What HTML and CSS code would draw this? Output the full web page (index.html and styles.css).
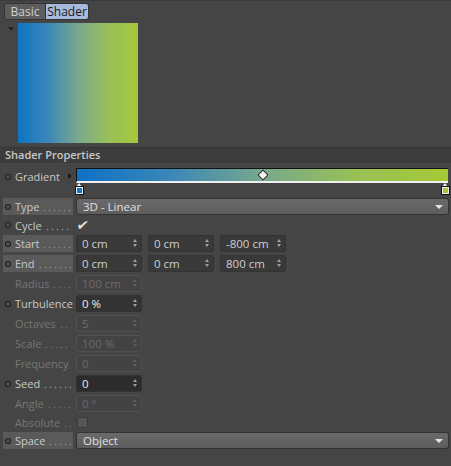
FILE: index.html
```html
<!DOCTYPE html>
<html>
<head>
<meta charset="utf-8">
<link rel="stylesheet" href="styles.css">
</head>
<body>
<div class="tabs">
  <div class="tab">Basic</div>
  <div class="tab active">Shader</div>
</div>
<div class="preview-row">
  <div class="tri-down"></div>
  <div class="preview"></div>
</div>
<div class="header">Shader Properties</div>
<div class="grad-row">
  <div class="label"><span class="dot"></span><span class="ltext">Gradient</span><span class="tri-right"></span></div>
  <div class="grad-wrap">
    <div class="grad-bar"></div>
    <div class="diamond"></div>
    <div class="knot knot-l"><span></span></div>
    <div class="knot knot-r"><span></span></div>
  </div>
</div>
<div class="rows">
  <div class="row">
    <div class="label hl"><span class="dot"></span><span class="ltext">Type</span><span class="dots"></span></div>
    <div class="dropdown">3D - Linear<span class="dd-arrow"></span></div>
  </div>
  <div class="row short">
    <div class="label"><span class="dot"></span><span class="ltext">Cycle</span><span class="dots"></span></div>
    <div class="check">&#10004;</div>
  </div>
  <div class="row">
    <div class="label hl"><span class="dot"></span><span class="ltext">Start</span><span class="dots"></span></div>
    <div class="field">0 cm<span class="spin"></span></div>
    <div class="field">0 cm<span class="spin"></span></div>
    <div class="field">-800 cm<span class="spin"></span></div>
  </div>
  <div class="row">
    <div class="label hl"><span class="dot"></span><span class="ltext">End</span><span class="dots"></span></div>
    <div class="field">0 cm<span class="spin"></span></div>
    <div class="field">0 cm<span class="spin"></span></div>
    <div class="field">800 cm<span class="spin"></span></div>
  </div>
  <div class="row dis">
    <div class="label"><span class="nodot"></span><span class="ltext">Radius</span><span class="dots"></span></div>
    <div class="field">100 cm<span class="spin"></span></div>
  </div>
  <div class="row">
    <div class="label"><span class="dot"></span><span class="ltext">Turbulence</span></div>
    <div class="field focus">0 %<span class="spin"></span></div>
  </div>
  <div class="row dis">
    <div class="label"><span class="nodot"></span><span class="ltext">Octaves</span><span class="dots"></span></div>
    <div class="field">5<span class="spin"></span></div>
  </div>
  <div class="row dis">
    <div class="label"><span class="nodot"></span><span class="ltext">Scale</span><span class="dots"></span></div>
    <div class="field">100 %<span class="spin"></span></div>
  </div>
  <div class="row dis">
    <div class="label"><span class="nodot"></span><span class="ltext">Frequency</span></div>
    <div class="field">0<span class="spin"></span></div>
  </div>
  <div class="row">
    <div class="label"><span class="dot"></span><span class="ltext">Seed</span><span class="dots"></span></div>
    <div class="field focus dark">0<span class="spin"></span></div>
  </div>
  <div class="row dis">
    <div class="label"><span class="nodot"></span><span class="ltext">Angle</span><span class="dots"></span></div>
    <div class="field">0 °<span class="spin"></span></div>
  </div>
  <div class="row dis short">
    <div class="label"><span class="nodot"></span><span class="ltext">Absolute</span><span class="dots"></span></div>
    <div class="cbox"></div>
  </div>
  <div class="row">
    <div class="label hl"><span class="dot"></span><span class="ltext">Space</span><span class="dots"></span></div>
    <div class="dropdown">Object<span class="dd-arrow"></span></div>
  </div>
</div>
</body>
</html>
```

FILE: styles.css
```css
html, body {
  margin: 0;
  padding: 0;
}
body {
  background: #454545;
  font-family: "Open Sans", "Noto Sans", sans-serif;
  font-size: 11px;
  color: #c8c8c8;
  width: 451px;
  height: 466px;
  overflow: hidden;
  border-top: 1px solid #3a3a3a;
  box-sizing: border-box;
}
.tabs {
  display: flex;
  padding: 2px 0 0 4px;
  height: 18px;
}
.tab {
  line-height: 15px;
  padding: 0;
  width: 42px;
  box-sizing: border-box;
  height: 17px;
  text-align: center;
  background: #5d5d5d;
  border: 1px solid #333;
  border-radius: 3px 0 0 3px;
  color: #cfcfcf;
  font-size: 12px;
}
.tab.active {
  width: 43px;
  background: #a7b9dc;
  color: #1a1a1a;
  border-radius: 0 3px 3px 0;
  border-left: none;
}
.preview-row {
  display: flex;
  padding-top: 2px;
  height: 122px;
}
.tri-down {
  width: 0;
  height: 0;
  border-left: 3px solid transparent;
  border-right: 3px solid transparent;
  border-top: 4px solid #222;
  margin: 4px 0 0 8px;
}
.preview {
  margin-left: 4px;
  width: 120px;
  height: 120px;
  background: linear-gradient(to right, #0e74c4 0%, #3a87b8 25%, #7aa88f 50%, #98bf5a 75%, #a6c83a 100%);
}
.header {
  margin-top: 2px;
  border-top: 1px solid #363636;
  background: #3c3c3c;
  height: 15px;
  line-height: 14px;
  padding-left: 5px;
  font-weight: 600;
  font-size: 11px;
  color: #c9c9c9;
}
.grad-row {
  display: flex;
  margin-top: 5px;
  height: 30px;
}
.label {
  width: 70px;
  margin-left: 3px;
  height: 17px;
  display: flex;
  align-items: center;
  white-space: nowrap;
  position: relative;
  font-size: 11px;
  flex: none;
}
.label.hl {
  background: #5a5a5a;
}
.dot {
  width: 4px;
  height: 4px;
  border: 1px solid #1e1e1e;
  border-radius: 2px;
  background: #4a4a4a;
  margin: 0 3px 0 2px;
  flex: none;
}
.nodot {
  width: 6px;
  margin: 0 3px 0 2px;
  flex: none;
}
.ltext {
  margin-left: 1px;
  flex: none;
}
.dots {
  flex: 1;
  align-self: stretch;
  margin: 0 2px 0 2px;
  background-image: radial-gradient(circle, #8a8a8a 0.7px, transparent 1.1px);
  background-size: 5px 3px;
  background-repeat: repeat-x;
  background-position: 1px 11px;
}
.row.dis .dots {
  background-image: radial-gradient(circle, #686868 0.7px, transparent 1.1px);
}
.tri-right {
  position: absolute;
  left: 65px;
  top: 5px;
  width: 0;
  height: 0;
  border-top: 3px solid transparent;
  border-bottom: 3px solid transparent;
  border-left: 4px solid #1c1c1c;
}
.grad-wrap {
  position: relative;
  margin-left: 3px;
  width: 372px;
}
.grad-bar {
  height: 12px;
  border-top: 1px solid #111;
  border-left: 1px solid #111;
  border-bottom: 2px solid #f0f0f0;
  background: linear-gradient(to right, #0e72c6 0%, #3a86b8 25%, #77a98d 50%, #98c055 75%, #a6c936 100%);
}
.diamond {
  position: absolute;
  left: 183px;
  top: 3px;
  width: 6px;
  height: 6px;
  background: #f4f4f4;
  border: 1px solid #222;
  transform: rotate(45deg);
}
.knot {
  position: absolute;
  top: 15px;
  width: 7px;
  height: 11px;
}
.knot::before {
  content: "";
  position: absolute;
  left: 0;
  top: 0;
  border-left: 3.5px solid transparent;
  border-right: 3.5px solid transparent;
  border-bottom: 4px solid #f0f0f0;
}
.knot span {
  position: absolute;
  left: 0;
  top: 4px;
  width: 5px;
  height: 5px;
  border: 1px solid #f0f0f0;
  outline: 1px solid #111;
}
.knot-l { left: 0; }
.knot-l span { background: #1177c8; }
.knot-r { left: 366px; }
.knot-r span { background: #a6c836; }
.rows {
  display: flex;
  flex-direction: column;
  gap: 3px;
}
.row {
  display: flex;
  align-items: center;
  height: 17px;
}
.row.short {
  height: 14px;
}
.row .label {
  margin-right: 3px;
}
.dropdown {
  height: 15px;
  line-height: 15px;
  border: 1px solid #333;
  border-radius: 3px;
  background: linear-gradient(#6a6a6a, #5d5d5d);
  color: #e0e0e0;
  padding-left: 6px;
  width: 365px;
  position: relative;
  font-size: 11.5px;
}
.dd-arrow {
  position: absolute;
  right: 5px;
  top: 6px;
  width: 0;
  height: 0;
  border-left: 4px solid transparent;
  border-right: 4px solid transparent;
  border-top: 4px solid #e6e6e6;
}
.check {
  color: #e0e0e0;
  font-size: 14px;
  line-height: 14px;
  margin-left: 1px;
  transform: skewX(-10deg);
}
.field {
  width: 59px;
  height: 15px;
  line-height: 15px;
  padding-left: 5px;
  border: 1px solid #333;
  border-radius: 2px;
  background: #393939;
  color: #cfcfcf;
  margin-right: 6px;
  position: relative;
  font-size: 11.5px;
}
.field.focus {
  background: #333;
  color: #eaeaea;
}
.field.dark {
  background: #2c2c2c;
}
.spin {
  position: absolute;
  right: 4px;
  top: 3px;
  width: 0;
  height: 0;
  border-left: 2.5px solid transparent;
  border-right: 2.5px solid transparent;
  border-bottom: 3px solid #a0a0a0;
}
.spin::after {
  content: "";
  position: absolute;
  left: -2.5px;
  top: 5px;
  border-left: 2.5px solid transparent;
  border-right: 2.5px solid transparent;
  border-top: 3px solid #a0a0a0;
}
.row.dis .label {
  color: #777;
}
.row.dis .field {
  background: #434343;
  border-color: #505050;
  color: #6c6c6c;
}
.row.dis .spin {
  border-bottom-color: #5e5e5e;
}
.row.dis .spin::after {
  border-top-color: #5e5e5e;
}
.cbox {
  width: 9px;
  height: 9px;
  border: 1px solid #3a3a3a;
  border-radius: 2px;
  background: #565656;
  margin-left: 1px;
}
```
